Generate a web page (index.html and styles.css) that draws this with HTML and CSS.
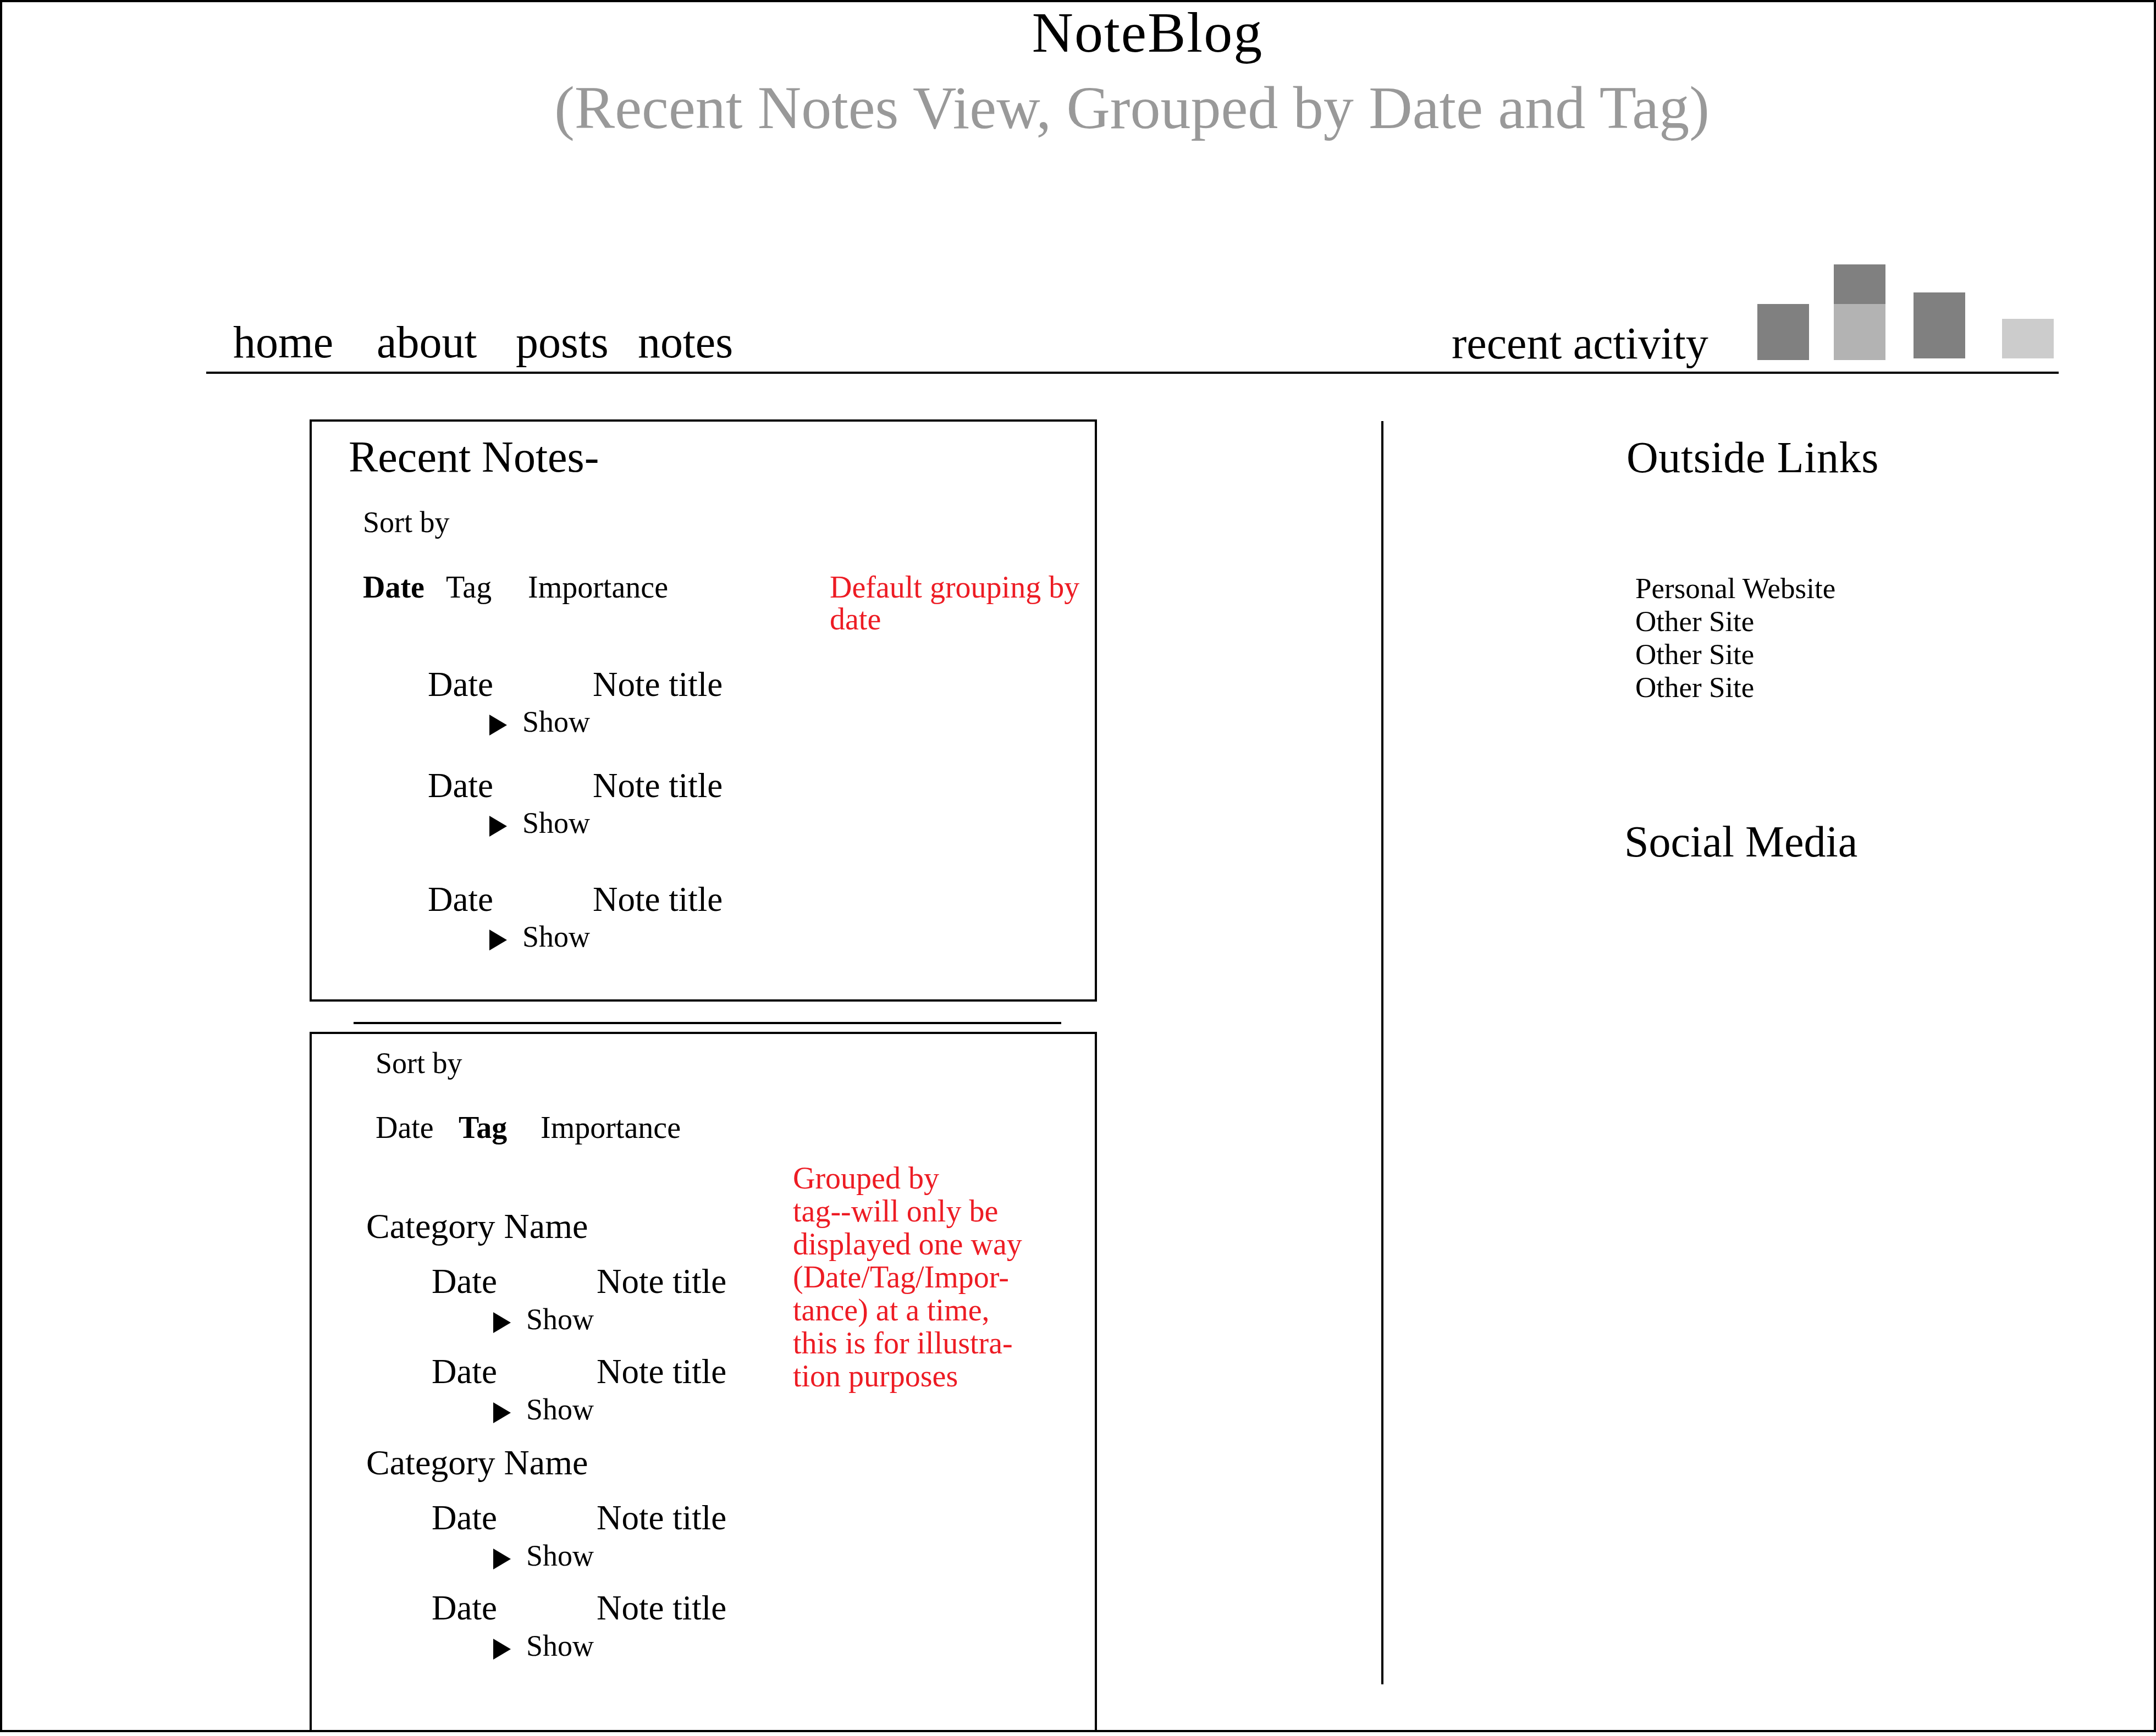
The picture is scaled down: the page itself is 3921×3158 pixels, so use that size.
FILE: index.html
```html
<!DOCTYPE html>
<html lang="en">
<head>
<meta charset="utf-8">
<title>NoteBlog - Recent Notes View</title>
<link rel="stylesheet" href="styles.css">
</head>
<body>
<div class="frame">
  <header class="masthead">
    <h1 class="site-title">NoteBlog</h1>
    <p class="site-subtitle">(Recent Notes View, Grouped by Date and Tag)</p>
  </header>

  <nav class="nav">
    <div class="nav-links">
      <a href="#">home</a>
      <a href="#">about</a>
      <a href="#">posts</a>
      <a href="#">notes</a>
    </div>
    <div class="activity">
      <span class="activity-label">recent activity</span>
      <div class="bars">
        <div class="bar"><div class="seg seg-dark" style="height:102px"></div></div>
        <div class="bar"><div class="seg seg-dark" style="height:72px"></div><div class="seg seg-mid" style="height:102px"></div></div>
        <div class="bar bar-raised"><div class="seg seg-dark" style="height:120px"></div></div>
        <div class="bar bar-raised"><div class="seg seg-light" style="height:72px"></div></div>
      </div>
    </div>
  </nav>

  <main class="main">
    <section class="notes-col">
      <div class="card card-recent">
        <h2 class="card-title">Recent Notes-</h2>
        <div class="sort-label">Sort by</div>
        <div class="sort-row">
          <div class="sort-options">
            <span class="opt opt-active">Date</span>
            <span class="opt">Tag</span>
            <span class="opt">Importance</span>
          </div>
          <p class="hint">Default grouping by<br>date</p>
        </div>
        <div class="note-list note-list-date">
          <div class="note">
            <div class="note-head"><span class="note-date">Date</span><span class="note-title">Note title</span></div>
            <div class="note-show"><span class="tri"></span>Show</div>
          </div>
          <div class="note">
            <div class="note-head"><span class="note-date">Date</span><span class="note-title">Note title</span></div>
            <div class="note-show"><span class="tri"></span>Show</div>
          </div>
          <div class="note note-spaced">
            <div class="note-head"><span class="note-date">Date</span><span class="note-title">Note title</span></div>
            <div class="note-show"><span class="tri"></span>Show</div>
          </div>
        </div>
      </div>

      <hr class="rule">

      <div class="card card-tag">
        <div class="sort-label sort-label-tag">Sort by</div>
        <div class="sort-row sort-row-tag">
          <div class="sort-options">
            <span class="opt">Date</span>
            <span class="opt opt-active">Tag</span>
            <span class="opt">Importance</span>
          </div>
        </div>
        <div class="tag-body">
          <div class="tag-groups">
            <div class="category">Category Name</div>
            <div class="note-list note-list-tag">
              <div class="note">
                <div class="note-head"><span class="note-date">Date</span><span class="note-title">Note title</span></div>
                <div class="note-show"><span class="tri"></span>Show</div>
              </div>
              <div class="note">
                <div class="note-head"><span class="note-date">Date</span><span class="note-title">Note title</span></div>
                <div class="note-show"><span class="tri"></span>Show</div>
              </div>
            </div>
            <div class="category category-next">Category Name</div>
            <div class="note-list note-list-tag">
              <div class="note">
                <div class="note-head"><span class="note-date">Date</span><span class="note-title">Note title</span></div>
                <div class="note-show"><span class="tri"></span>Show</div>
              </div>
              <div class="note">
                <div class="note-head"><span class="note-date">Date</span><span class="note-title">Note title</span></div>
                <div class="note-show"><span class="tri"></span>Show</div>
              </div>
            </div>
          </div>
          <p class="hint hint-tag">Grouped by<br>tag--will only be<br>displayed one way<br>(Date/Tag/Impor-<br>tance) at a time,<br>this is for illustra-<br>tion purposes</p>
        </div>
      </div>
    </section>

    <div class="divider"></div>

    <aside class="side">
      <h2 class="side-title side-title-links">Outside Links</h2>
      <ul class="links">
        <li><a href="#">Personal Website</a></li>
        <li><a href="#">Other Site</a></li>
        <li><a href="#">Other Site</a></li>
        <li><a href="#">Other Site</a></li>
      </ul>
      <h2 class="side-title side-title-social">Social Media</h2>
    </aside>
  </main>
</div>
</body>
</html>
```
FILE: styles.css
```css
html, body {
  margin: 0;
  padding: 0;
  background: #ffffff;
  overflow: hidden;
}

body {
  font-family: "Liberation Serif", "Times New Roman", serif;
  color: #000000;
}

a {
  color: #000000;
  text-decoration: none;
}

.frame {
  box-sizing: border-box;
  width: 3921px;
  height: 3151px;
  border: 4px solid #000000;
}

/* Masthead */
.site-title {
  margin: 0;
  padding-left: 253px;
  font-size: 104px;
  font-weight: normal;
  letter-spacing: 2px;
  line-height: 110px;
  text-align: center;
}

.site-subtitle {
  margin: 32px 0 0 0;
  padding-left: 196px;
  font-size: 110px;
  line-height: 100px;
  text-align: center;
  color: #999999;
}

/* Navigation */
.nav {
  display: flex;
  justify-content: space-between;
  align-items: flex-end;
  width: 3369px;
  margin: 235px 0 0 371px;
  border-bottom: 4px solid #000000;
}

.nav-links {
  display: flex;
  padding: 0 0 12px 49px;
  font-size: 82px;
  line-height: 82px;
}

.nav-links a:nth-child(1) { width: 261px; }
.nav-links a:nth-child(2) { width: 253px; }
.nav-links a:nth-child(3) { width: 222px; }

.activity {
  display: flex;
  align-items: flex-end;
  padding-right: 9px;
}

.activity-label {
  width: 556px;
  padding-bottom: 10px;
  font-size: 82px;
  line-height: 82px;
  white-space: nowrap;
}

.bars {
  display: flex;
  align-items: flex-end;
  padding-bottom: 21px;
}

.bar {
  display: flex;
  flex-direction: column;
  width: 94px;
}

.bar:nth-child(2) { margin-left: 45px; }
.bar:nth-child(3) { margin-left: 51px; }
.bar:nth-child(4) { margin-left: 67px; }

.bar-raised { margin-bottom: 3px; }

.seg-dark { background: #808080; }
.seg-mid { background: #b3b3b3; }
.seg-light { background: #cccccc; }

/* Main area */
.main {
  display: flex;
  align-items: flex-start;
  margin-top: 83px;
}

.notes-col {
  width: 1432px;
  margin-left: 559px;
}

.card {
  box-sizing: border-box;
  border: 4px solid #000000;
}

.card-recent {
  height: 1059px;
}

.card-tag {
  height: 1279px;
  margin-top: 14px;
}

.rule {
  width: 1287px;
  height: 0;
  margin: 37px 0 0 80px;
  border: 0;
  border-top: 4px solid #000000;
}

.card-title {
  margin: 24px 0 0 67px;
  font-size: 80px;
  font-weight: normal;
  line-height: 80px;
}

.sort-label {
  margin: 52px 0 0 93px;
  font-size: 54px;
  line-height: 54px;
}

.sort-label-tag {
  margin: 26px 0 0 116px;
}

.sort-row {
  display: flex;
  align-items: baseline;
  margin-top: 62px;
  padding-left: 93px;
}

.sort-row-tag {
  margin-top: 61px;
  padding-left: 116px;
}

.sort-options {
  display: flex;
  width: 849px;
  font-size: 56px;
  line-height: 58px;
}

.opt:nth-child(1) { width: 151px; }
.opt:nth-child(2) { width: 149px; }

.opt-active {
  font-weight: bold;
}

.hint {
  margin: 0;
  font-size: 56px;
  line-height: 58px;
  color: #ed1c24;
  white-space: nowrap;
}

/* Note rows */
.note-list-date {
  padding-left: 211px;
}

.note-list-tag {
  padding-left: 218px;
}

.note {
  margin-top: 58px;
}

.note:first-child {
  margin-top: 59px;
}

.note-spaced {
  margin-top: 81px;
}

.note-list-tag .note,
.note-list-tag .note:first-child {
  margin-top: 37px;
}

.note-head {
  display: flex;
  font-size: 63px;
  line-height: 63px;
}

.note-date {
  width: 300px;
}

.note-show {
  margin-top: 9px;
  padding-left: 112px;
  font-size: 54px;
  line-height: 54px;
}

.note-list-tag .note-show {
  margin-top: 10px;
}

.tri {
  display: inline-block;
  width: 0;
  height: 0;
  margin-right: 28px;
  border-top: 19px solid transparent;
  border-bottom: 19px solid transparent;
  border-left: 32px solid #000000;
  vertical-align: -7px;
}

/* Tag grouping */
.tag-body {
  display: flex;
  align-items: flex-start;
}

.tag-groups {
  width: 875px;
}

.category {
  margin-top: 119px;
  padding-left: 99px;
  font-size: 64px;
  line-height: 64px;
}

.category-next {
  margin-top: 38px;
}

.hint-tag {
  margin-top: 33px;
  line-height: 60px;
}

/* Divider and sidebar */
.divider {
  width: 0;
  height: 2298px;
  margin: 3px 0 0 517px;
  border-left: 4px solid #000000;
}

.side {
  padding-left: 438px;
}

.side-title {
  margin: 0;
  font-size: 80px;
  font-weight: normal;
  line-height: 80px;
  white-space: nowrap;
}

.side-title-links {
  margin-top: 29px;
  padding-left: 4px;
  letter-spacing: 0.6px;
}

.links {
  margin: 168px 0 0 0;
  padding: 0 0 0 20px;
  list-style: none;
  font-size: 53px;
  line-height: 60px;
}

.side-title-social {
  margin-top: 211px;
}
```
